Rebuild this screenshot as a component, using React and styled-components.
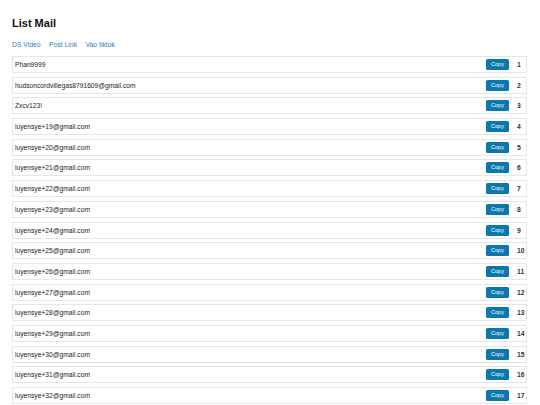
import React from "react";
import styled, { createGlobalStyle } from "styled-components";

const Global = createGlobalStyle`
  html, body { margin: 0; padding: 0; background: #fff; }
  body { font-family: "Liberation Sans", Arial, sans-serif; color: #222; }
`;

const Page = styled.div`
  padding: 16px 13px 0 12px;
`;

const Title = styled.h1`
  margin: 0;
  font-size: 11px;
  font-weight: bold;
  line-height: 14px;
  color: #111;
`;

const Links = styled.nav`
  display: flex;
  gap: 8.5px;
  margin-top: 10px;
  font-size: 6.8px;
  line-height: 9px;
`;

const Link = styled.a`
  color: #2a7fb8;
  text-decoration: none;
`;

const List = styled.div`
  display: flex;
  flex-direction: column;
  gap: 3.7px;
  margin-top: 7px;
`;

const Row = styled.div`
  display: flex;
  align-items: center;
  height: 17px;
  box-sizing: border-box;
  border: 1px solid #e6e6e6;
  padding: 0 0 0 2px;
  font-size: 6.7px;
  color: #222;
`;

const Mail = styled.span`
  flex: 1;
`;

const CopyBtn = styled.button`
  width: 23px;
  height: 11px;
  padding: 0;
  border: none;
  border-radius: 1.5px;
  background: #0b78ad;
  color: #fff;
  font-family: "Liberation Sans", Arial, sans-serif;
  font-size: 5.5px;
  line-height: 11px;
  margin-right: 8px;
`;

const Num = styled.span`
  width: 9px;
  font-weight: bold;
  font-size: 6.8px;
  color: #333;
  text-align: left;
`;

const mails = [
  "Phan9999",
  "hudsoncordvillegas8791609@gmail.com",
  "Zxcv123!",
  ...Array.from({ length: 14 }, (_, i) => `luyensye+${19 + i}@gmail.com`),
];

export default function App() {
  return (
    <>
      <Global />
      <Page>
        <Title>List Mail</Title>
        <Links>
          <Link href="#">DS Video</Link>
          <Link href="#">Post Link</Link>
          <Link href="#">Vao tiktok</Link>
        </Links>
        <List>
          {mails.map((m, i) => (
            <Row key={i}>
              <Mail>{m}</Mail>
              <CopyBtn>Copy</CopyBtn>
              <Num>{i + 1}</Num>
            </Row>
          ))}
        </List>
      </Page>
    </>
  );
}
